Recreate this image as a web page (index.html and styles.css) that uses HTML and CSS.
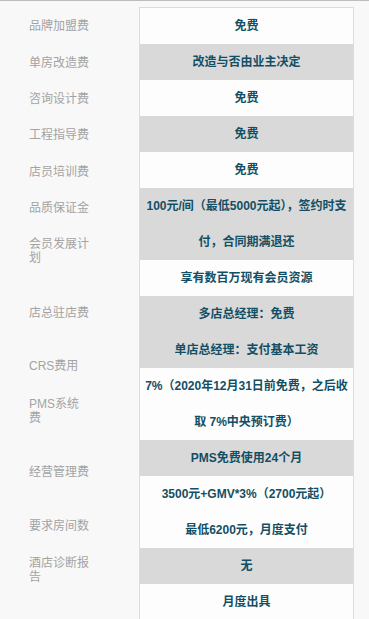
FILE: index.html
```html
<!DOCTYPE html>
<html lang="zh-CN">
<head>
<meta charset="utf-8">
<title>费用说明</title>
<link rel="stylesheet" href="styles.css">
</head>
<body>
<div class="page">
  <div class="labels">
    <div class="lbl h37">品牌加盟费</div>
    <div class="lbl">单房改造费</div>
    <div class="lbl">咨询设计费</div>
    <div class="lbl h37">工程指导费</div>
    <div class="lbl">店员培训费</div>
    <div class="lbl">品质保证金</div>
    <div class="lbl h69">会员发展计划</div>
    <div class="lbl h53">店总驻店费</div>
    <div class="lbl h38">CRS费用</div>
    <div class="lbl h68">PMS系统费</div>
    <div class="lbl h54">经营管理费</div>
    <div class="lbl h37">要求房间数</div>
    <div class="lbl">酒店诊断报告</div>
  </div>
  <div class="values">
    <div class="row">免费</div>
    <div class="row alt">改造与否由业主决定</div>
    <div class="row">免费</div>
    <div class="row alt">免费</div>
    <div class="row">免费</div>
    <div class="row alt">100元/间（最低5000元起），签约时支付，合同期满退还</div>
    <div class="row">享有数百万现有会员资源</div>
    <div class="row alt"><div>多店总经理：免费</div><div>单店总经理：支付基本工资</div></div>
    <div class="row">7%（2020年12月31日前免费，之后收取 7%中央预订费）</div>
    <div class="row alt">PMS免费使用24个月</div>
    <div class="row"><div>3500元+GMV*3%（2700元起）</div><div>最低6200元，月度支付</div></div>
    <div class="row alt">无</div>
    <div class="row">月度出具</div>
  </div>
</div>
</body>
</html>
```
FILE: styles.css
```css
html, body {
  margin: 0;
  padding: 0;
}
body {
  background: #f8f8f8;
  border-top: 1px solid #bdbdbd;
  font-family: "Liberation Sans", "Noto Sans CJK SC", sans-serif;
  overflow: hidden;
}
.page {
  display: flex;
  align-items: flex-start;
}
.labels {
  width: 110px;
  padding: 18px 0 0 29px;
  flex: none;
  display: flex;
  flex-direction: column;
}
.lbl {
  width: 61px;
  height: 36px;
  font-size: 12px;
  line-height: 14px;
  color: #a3a3a3;
}
.lbl.h37 { height: 37px; }
.lbl.h38 { height: 38px; }
.lbl.h53 { height: 53px; }
.lbl.h54 { height: 54px; }
.lbl.h68 { height: 68px; }
.lbl.h69 { height: 69px; }
.values {
  width: 213px;
  margin-top: 6px;
  border: 1px solid #dcdcdc;
  border-bottom: none;
  background: #fdfdfd;
  flex: none;
}
.row {
  padding: 0 2px;
  line-height: 36px;
  font-size: 12px;
  font-weight: bold;
  color: #134f64;
  text-align: center;
}
.row.alt {
  background: #d9d9d9;
}
```
